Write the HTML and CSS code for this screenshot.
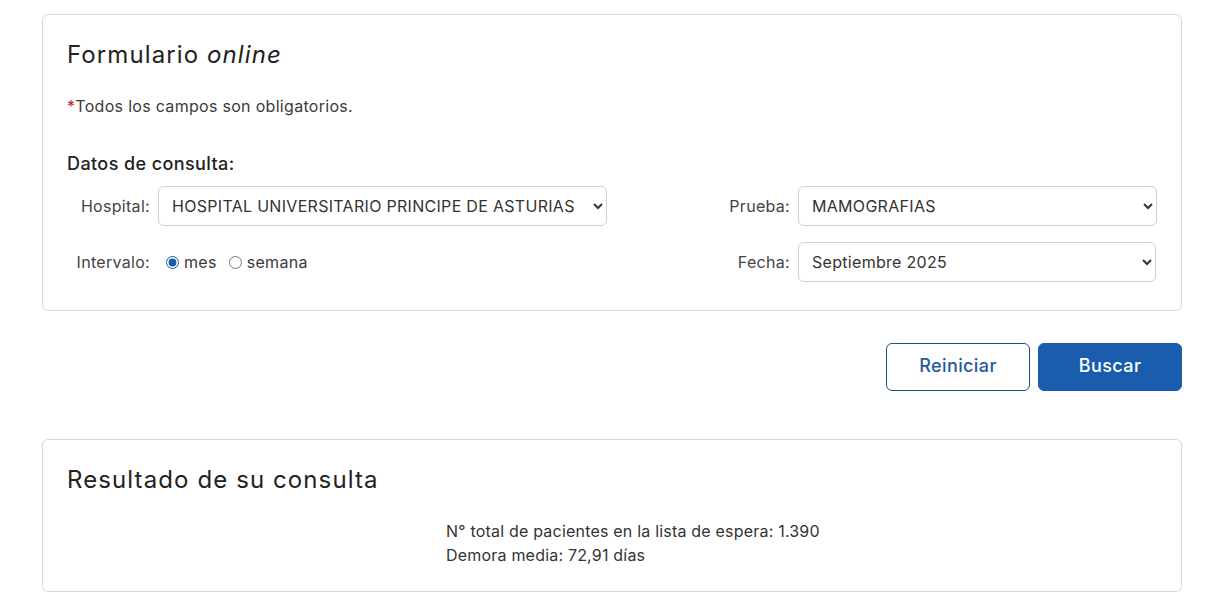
FILE: index.html
```html
<!DOCTYPE html>
<html lang="es">
<head>
<meta charset="utf-8">
<title>Formulario online</title>
<link rel="stylesheet" href="styles.css">
</head>
<body>
<main class="page">
  <section class="card form-card">
    <h2 class="card-title">Formulario <em>online</em></h2>
    <p class="required-note"><span class="asterisk">*</span>Todos los campos son obligatorios.</p>
    <h3 class="section-title">Datos de consulta:</h3>
    <div class="form-grid">
      <label class="field-label" for="hospital">Hospital:</label>
      <select id="hospital" class="field-select">
        <option>HOSPITAL UNIVERSITARIO PRINCIPE DE ASTURIAS</option>
      </select>
      <label class="field-label" for="prueba">Prueba:</label>
      <select id="prueba" class="field-select">
        <option>MAMOGRAFIAS</option>
      </select>

      <span class="field-label">Intervalo:</span>
      <div class="radio-group">
        <label class="radio"><input type="radio" name="intervalo" checked> mes</label>
        <label class="radio"><input type="radio" name="intervalo"> semana</label>
      </div>
      <label class="field-label" for="fecha">Fecha:</label>
      <select id="fecha" class="field-select">
        <option>Septiembre 2025</option>
      </select>
    </div>
  </section>

  <div class="actions">
    <button class="btn btn-outline" type="button">Reiniciar</button>
    <button class="btn btn-primary" type="button">Buscar</button>
  </div>

  <section class="card result-card">
    <h2 class="card-title">Resultado de su consulta</h2>
    <div class="result-body">
      <p class="result-line">N° total de pacientes en la lista de espera: 1.390</p>
      <p class="result-line">Demora media: 72,91 días</p>
    </div>
  </section>
</main>
</body>
</html>
```

FILE: styles.css
```css
* { box-sizing: border-box; }

html, body {
  margin: 0;
  padding: 0;
  background: #fff;
}

body {
  font-family: Inter, "Noto Sans", "DejaVu Sans", sans-serif;
  color: #333;
  font-size: 16px;
  letter-spacing: 0.3px;
}

.page {
  width: 1140px;
  margin-left: 42px;
  padding-top: 14px;
}

.card {
  border: 1px solid #d9d9d9;
  border-radius: 6px;
  background: #fff;
}

.form-card {
  padding: 25px 24px 28px;
}

.card-title {
  margin: 0;
  font-size: 24px;
  line-height: 30px;
  font-weight: 400;
  color: #222;
  letter-spacing: 1.1px;
}

.card-title em {
  font-style: italic;
}

.required-note {
  margin: 24px 0 0;
  font-size: 16px;
  line-height: 24px;
  color: #3a3a3a;
}

.asterisk {
  color: #c8102e;
}

.section-title {
  margin: 32px 0 0;
  font-size: 18px;
  line-height: 27px;
  font-weight: 500;
  color: #222;
  letter-spacing: 0.4px;
}

.form-grid {
  margin-top: 9px;
  display: grid;
  grid-template-columns: 83px 449px 1fr 359px;
  column-gap: 8px;
  row-gap: 16px;
  align-items: center;
}

.field-label {
  text-align: right;
  font-size: 16px;
  color: #444;
  white-space: nowrap;
}

.field-select {
  width: 100%;
  height: 40px;
  border: 1px solid #cfcfcf;
  border-radius: 6px;
  background: #fff;
  padding: 0 8px 0 9px;
  font-family: inherit;
  font-size: 16px;
  letter-spacing: 0.3px;
  color: #333;
}

.form-grid .field-select:last-child {
  width: 358px;
}

.radio-group {
  display: flex;
  align-items: center;
  gap: 12px;
  padding-left: 8px;
  height: 40px;
}

.radio {
  display: flex;
  align-items: center;
  gap: 5px;
  font-size: 16px;
  color: #3a3a3a;
}

.radio input {
  margin: 0;
  width: 13px;
  height: 13px;
  accent-color: #1a5ca8;
}

.actions {
  margin-top: 32px;
  display: flex;
  justify-content: flex-end;
  gap: 8px;
}

.btn {
  width: 144px;
  height: 48px;
  padding: 0 0 3px;
  border-radius: 6px;
  font-family: inherit;
  font-size: 18px;
  font-weight: 500;
  letter-spacing: 0.4px;
  cursor: pointer;
}

.btn-outline {
  background: #fff;
  border: 1px solid #1d4f86;
  color: #1f5a9c;
}

.btn-primary {
  background: #1a5cad;
  border: 1px solid #1a5cad;
  color: #fff;
}

.result-card {
  margin-top: 48px;
  padding: 25px 24px 24px;
}

.result-body {
  margin-top: 24px;
  padding-left: 379px;
}

.result-line {
  margin: 0;
  font-size: 16px;
  line-height: 24px;
  letter-spacing: 0.2px;
  color: #333;
}
```
